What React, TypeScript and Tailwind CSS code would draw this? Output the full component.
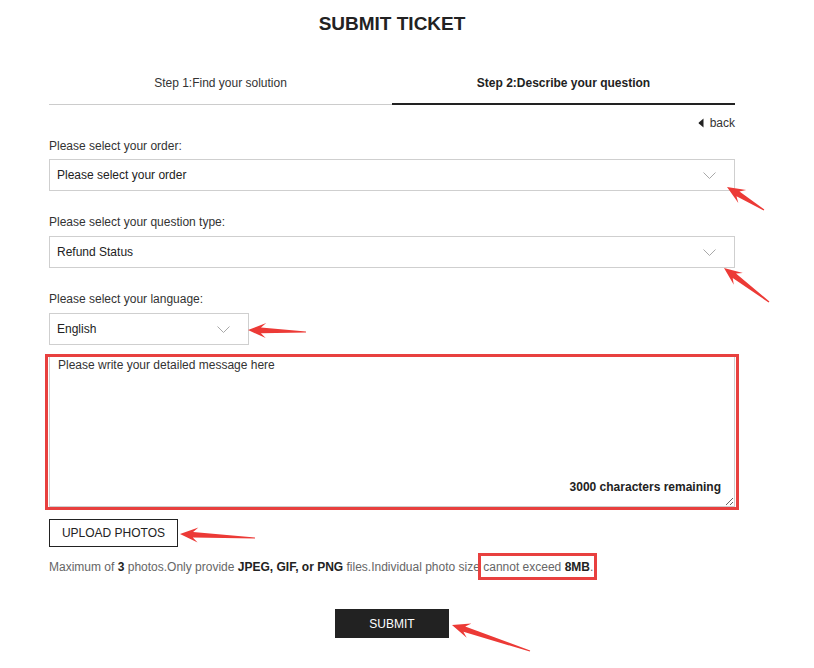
import React from 'react';

type Pt = [number, number];

// red annotation arrow, drawn from tail to tip
const arrowPoints = (tail: Pt, tip: Pt) => {
    const dx = tip[0] - tail[0];
    const dy = tip[1] - tail[1];
    const len = Math.hypot(dx, dy);
    const ux = dx / len;
    const uy = dy / len;
    const nx = -uy;
    const ny = ux;
    const head = 18;
    const neck: Pt = [tip[0] - ux * head * 0.72, tip[1] - uy * head * 0.72];
    const wing: Pt = [tip[0] - ux * head, tip[1] - uy * head];
    const pts: Pt[] = [
        [tail[0] + nx * 0.6, tail[1] + ny * 0.6],
        [neck[0] + nx * 2.8, neck[1] + ny * 2.8],
        [wing[0] + nx * 7.5, wing[1] + ny * 7.5],
        tip,
        [wing[0] - nx * 7.5, wing[1] - ny * 7.5],
        [neck[0] - nx * 2.8, neck[1] - ny * 2.8],
        [tail[0] - nx * 0.6, tail[1] - ny * 0.6],
    ];
    return pts.map((p) => `${p[0].toFixed(1)},${p[1].toFixed(1)}`).join(' ');
};

const ARROWS: [Pt, Pt][] = [
    [[764, 210], [727, 187]],
    [[769, 302], [724, 268]],
    [[306, 332], [248, 330]],
    [[255, 538], [180, 534]],
    [[530, 651], [452, 625]],
];

const Chevron = () => (
    <svg width="13" height="7" viewBox="0 0 13 7" className="shrink-0">
        <polyline points="0.5,0.5 6.5,6.5 12.5,0.5" fill="none" stroke="#a8a8a8" strokeWidth="1" />
    </svg>
);

const SelectBox = ({ value, className }: { value: string; className: string }) => (
    <div className={`flex items-center justify-between h-[32px] border border-[#cfcfcf] pl-[7px] pr-[18px] text-[12px] text-[#222] ${className}`}>
        <span>{value}</span>
        <Chevron />
    </div>
);

const Label = ({ text, className }: { text: string; className: string }) => (
    <div className={`text-[12px] leading-[14px] text-[#333] ${className}`}>{text}</div>
);

export default function App() {
    return (
        <div className="relative w-[814px] h-[668px] overflow-hidden bg-white text-[#333] font-['Liberation_Sans',Arial,sans-serif]">
            <div className="ml-[49px] w-[686px]">
                <h1 className="pt-[13px] text-center text-[19px] leading-[22px] font-bold text-[#222]">SUBMIT TICKET</h1>

                {/* Steps */}
                <div className="mt-[41px] flex items-end">
                    <div className="flex-1 text-center text-[12px] leading-[14px] text-[#333] pb-[14px] border-b border-[#cccccc]">
                        Step 1:Find your solution
                    </div>
                    <div className="flex-1 text-center text-[12px] leading-[14px] font-bold text-[#222] pb-[13px] border-b-2 border-[#222]">
                        Step 2:Describe your question
                    </div>
                </div>

                {/* Back */}
                <div className="mt-[11px] flex justify-end">
                    <div className="flex items-center gap-[6px] text-[12px] leading-[14px] text-[#333]">
                        <svg width="6" height="10" viewBox="0 0 6 10">
                            <path d="M5.5 0.5 L5.5 9.5 L0.8 5.6 Q0.3 5 0.8 4.4 Z" fill="#222" />
                        </svg>
                        <span>back</span>
                    </div>
                </div>

                <Label text="Please select your order:" className="mt-[9px]" />
                <SelectBox value="Please select your order" className="mt-[6px] w-full" />

                <Label text="Please select your question type:" className="mt-[24px]" />
                <SelectBox value="Refund Status" className="mt-[7px] w-full" />

                <Label text="Please select your language:" className="mt-[24px]" />
                <SelectBox value="English" className="mt-[7px] w-[200px]" />

                {/* Message */}
                <div className="relative mt-[11px] h-[151px]">
                    <textarea
                        placeholder="Please write your detailed message here"
                        className="block w-full h-full border border-[#cfcfcf] pl-[8px] pt-[1px] text-[12px] leading-[14px] text-[#222] placeholder:text-[#333] outline-none resize"
                    />
                    <div className="absolute right-[14px] bottom-[13px] text-[12px] leading-[14px] font-bold text-[#222]">
                        3000 characters remaining
                    </div>
                    <div className="absolute -left-[4px] -right-[4px] -top-[2px] -bottom-[3px] border-[3px] border-[#e8403f] pointer-events-none" />
                </div>

                {/* Upload */}
                <button className="mt-[12px] flex items-center justify-center w-[129px] h-[28px] border border-[#222] bg-white text-[12px] text-[#222]">
                    UPLOAD PHOTOS
                </button>

                <p className="mt-[13px] text-[12px] leading-[14px] text-[#666] whitespace-nowrap">
                    Maximum of <b className="text-[#222]">3</b> photos.Only provide <b className="text-[#222]">JPEG, GIF, or PNG</b> files.Individual photo size{' '}
                    <span className="relative">
                        cannot exceed <b className="text-[#222]">8MB</b>.
                        <span className="absolute -left-[5px] -right-[4px] -top-[7px] -bottom-[6px] border-[3px] border-[#e8403f]" />
                    </span>
                </p>

                {/* Submit */}
                <button className="mt-[35px] mx-auto flex items-center justify-center w-[114px] h-[29px] bg-[#222] text-white text-[12px]">
                    SUBMIT
                </button>
            </div>

            {/* annotation arrows */}
            <svg className="absolute inset-0 pointer-events-none" width="814" height="668">
                {ARROWS.map(([tail, tip], i) => (
                    <polygon key={i} points={arrowPoints(tail, tip)} fill="#ec3a36" />
                ))}
            </svg>
        </div>
    );
}
